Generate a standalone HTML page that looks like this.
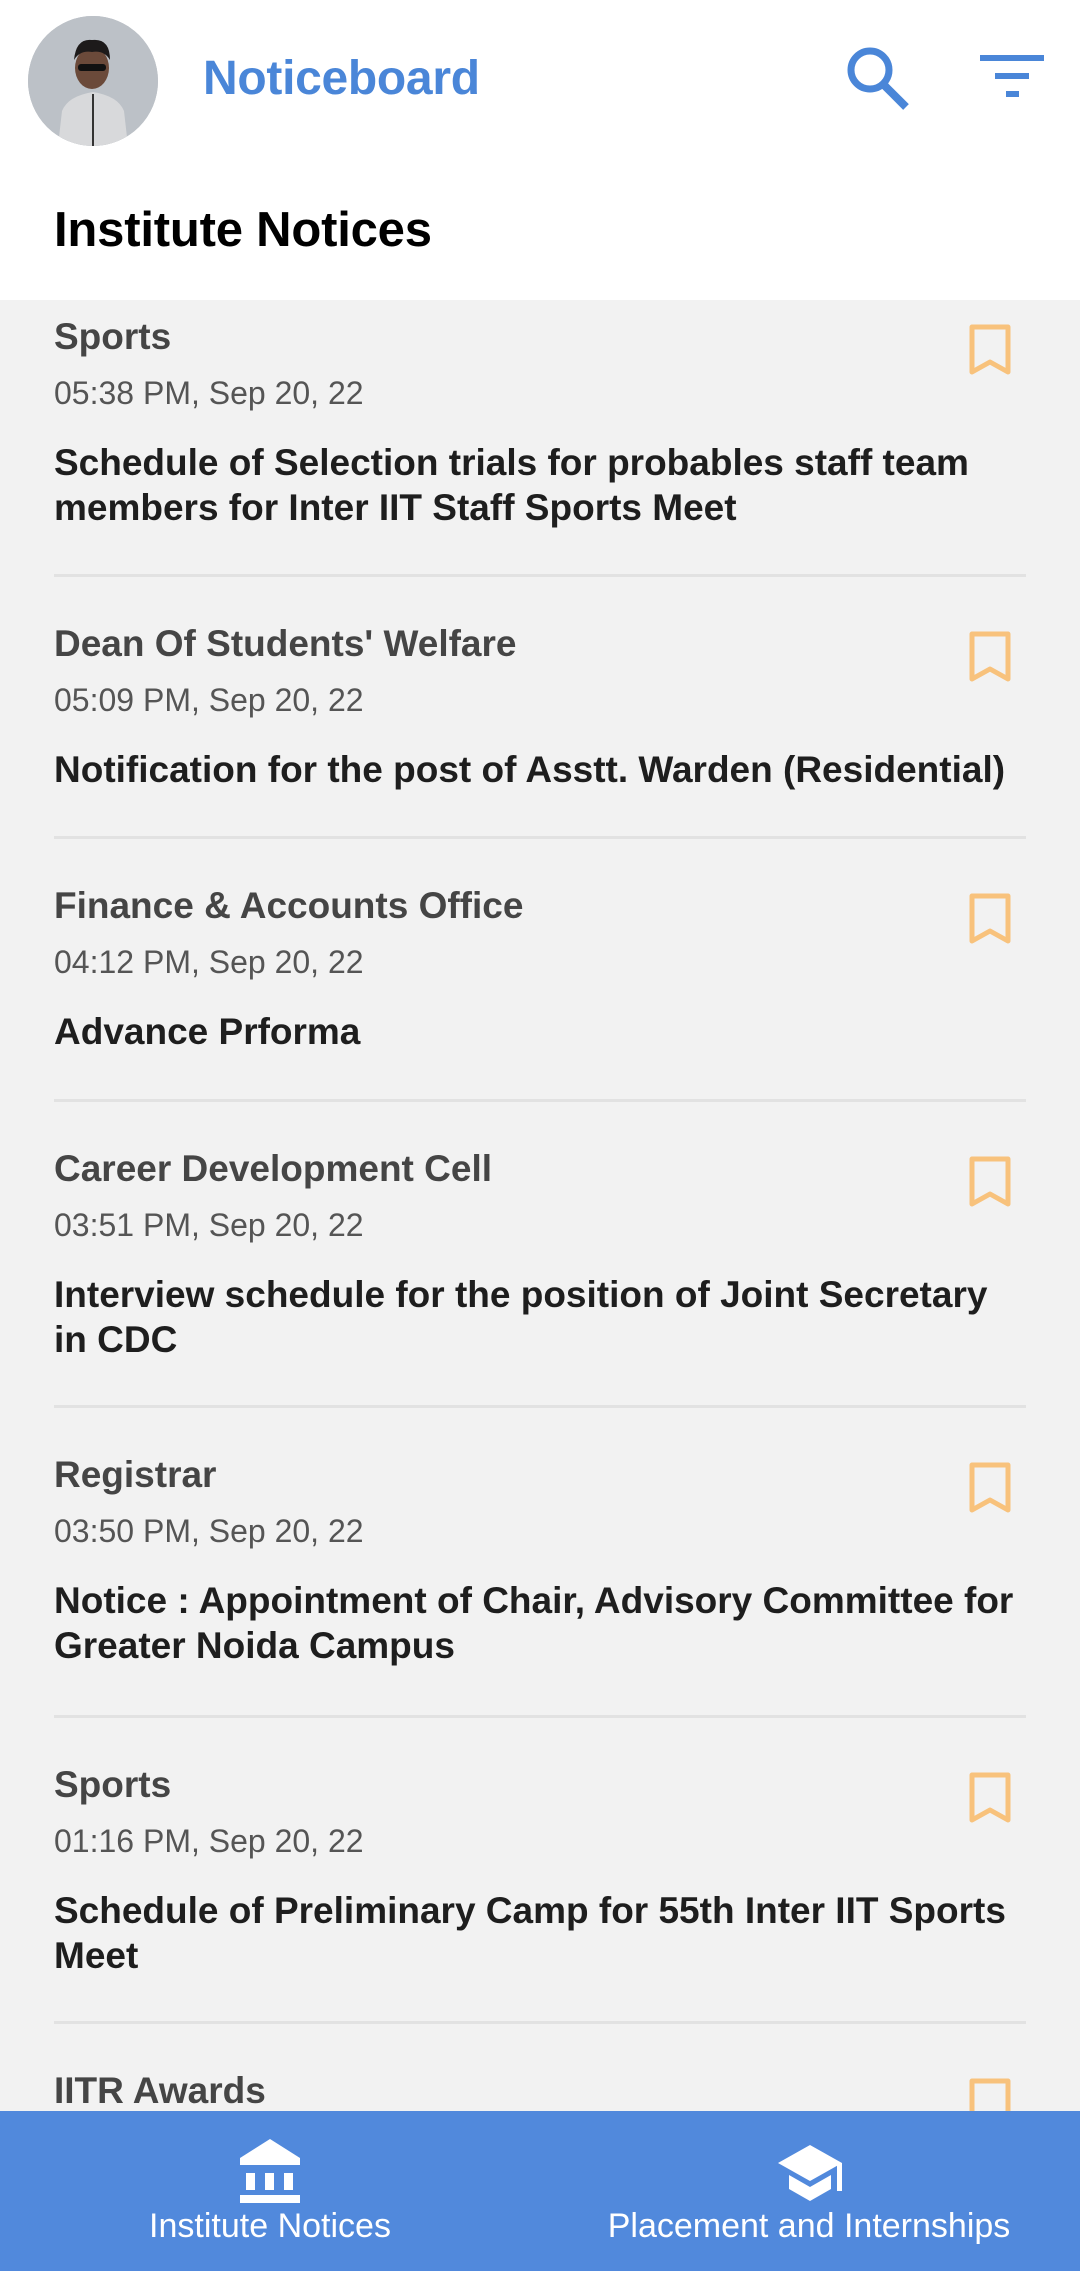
<!DOCTYPE html>
<html><head><meta charset="utf-8">
<style>
*{margin:0;padding:0;box-sizing:border-box}
body{width:1080px;height:2271px;overflow:hidden;background:#f2f2f2;font-family:"Liberation Sans",Arial,sans-serif;position:relative}
.top{position:absolute;left:0;top:0;width:1080px;height:300px;background:#fff;z-index:2}
.avatar{position:absolute;left:28px;top:16px;width:130px;height:130px;border-radius:50%;background:#b9bec4;overflow:hidden}
.brand{position:absolute;left:203px;top:51px;font-size:48px;font-weight:bold;color:#4a86d8;letter-spacing:-0.3px}
.h1{position:absolute;left:54px;top:202px;font-size:49px;font-weight:bold;color:#000;letter-spacing:-0.2px}
.item{position:absolute;left:0;width:1080px}
.cat{position:absolute;left:54px;font-size:37px;font-weight:bold;color:#454545;white-space:nowrap}
.date{position:absolute;left:54px;font-size:32px;color:#555;white-space:nowrap}
.title{position:absolute;left:54px;width:990px;font-size:37px;font-weight:bold;color:#1e1e1e;line-height:45px}
.sep{position:absolute;left:54px;width:972px;height:3px;background:#e2e2e2}
.bm{position:absolute;left:968px;width:44px;height:54px}
.nav{position:absolute;left:0;top:2111px;width:1080px;height:160px;background:#5189dc;z-index:3}
.nav .lbl{position:absolute;top:96px;font-size:34px;color:#fff;white-space:nowrap;transform:translateX(-50%)}
</style></head><body>
<div class="top">
  <div class="avatar">
    <svg width="130" height="130" viewBox="0 0 130 130">
      <rect width="130" height="130" fill="#bcc1c7"/>
      <path d="M30 130 L34 95 Q40 80 65 76 Q90 80 96 95 L100 130Z" fill="#d8d9db"/>
      <line x1="65" y1="78" x2="65" y2="130" stroke="#333" stroke-width="2"/>
      <ellipse cx="64" cy="52" rx="17" ry="21" fill="#6b4a3a"/>
      <path d="M46 44 Q48 22 64 24 Q82 22 82 44 Q76 34 64 36 Q52 34 46 44Z" fill="#1d1a1a"/>
      <rect x="50" y="48" width="28" height="7" rx="3" fill="#111"/>
    </svg>
  </div>
  <div class="brand">Noticeboard</div>
  <svg style="position:absolute;left:843px;top:43px" width="70" height="70" viewBox="0 0 70 70">
    <circle cx="27" cy="27" r="19" fill="none" stroke="#4a86d8" stroke-width="7"/>
    <line x1="40" y1="41" x2="63" y2="64" stroke="#4a86d8" stroke-width="8"/>
  </svg>
  <svg style="position:absolute;left:978px;top:55px" width="70" height="50" viewBox="0 0 70 50">
    <rect x="2" y="0" width="64" height="6" fill="#4a86d8"/>
    <rect x="17" y="18" width="34" height="6" fill="#4a86d8"/>
    <rect x="28" y="36" width="13" height="6" fill="#4a86d8"/>
  </svg>
  <div class="h1">Institute Notices</div>
</div>

<div class="item" style="top:268px">
  <div class="cat" style="top:48px">Sports</div>
  <div class="date" style="top:107px">05:38 PM, Sep 20, 22</div>
  <div class="title" style="top:172px">Schedule of Selection trials for probables staff team members for Inter IIT Staff Sports Meet</div>
</div>
<div class="sep" style="top:574px"></div>

<div class="item" style="top:575px">
  <div class="cat" style="top:48px">Dean Of Students' Welfare</div>
  <div class="date" style="top:107px">05:09 PM, Sep 20, 22</div>
  <div class="title" style="top:172px;white-space:nowrap">Notification for the post of Asstt. Warden (Residential)</div>
</div>
<div class="sep" style="top:836px"></div>

<div class="item" style="top:837px">
  <div class="cat" style="top:48px">Finance &amp; Accounts Office</div>
  <div class="date" style="top:107px">04:12 PM, Sep 20, 22</div>
  <div class="title" style="top:172px">Advance Prforma</div>
</div>
<div class="sep" style="top:1099px"></div>

<div class="item" style="top:1100px">
  <div class="cat" style="top:48px">Career Development Cell</div>
  <div class="date" style="top:107px">03:51 PM, Sep 20, 22</div>
  <div class="title" style="top:172px">Interview schedule for the position of Joint Secretary<br>in CDC</div>
</div>
<div class="sep" style="top:1405px"></div>

<div class="item" style="top:1406px">
  <div class="cat" style="top:48px">Registrar</div>
  <div class="date" style="top:107px">03:50 PM, Sep 20, 22</div>
  <div class="title" style="top:172px">Notice : Appointment of Chair, Advisory Committee for<br>Greater Noida Campus</div>
</div>
<div class="sep" style="top:1715px"></div>

<div class="item" style="top:1716px">
  <div class="cat" style="top:48px">Sports</div>
  <div class="date" style="top:107px">01:16 PM, Sep 20, 22</div>
  <div class="title" style="top:172px">Schedule of Preliminary Camp for 55th Inter IIT Sports<br>Meet</div>
</div>
<div class="sep" style="top:2021px"></div>

<div class="item" style="top:2022px">
  <div class="cat" style="top:48px">IITR Awards</div>
</div>

<svg class="bm" style="top:323px" viewBox="0 0 44 54"><path d="M4 4 H40 V49 L22 39 L4 49 Z" fill="none" stroke="#f8c27c" stroke-width="5" stroke-linejoin="round"/></svg>
<svg class="bm" style="top:630px" viewBox="0 0 44 54"><path d="M4 4 H40 V49 L22 39 L4 49 Z" fill="none" stroke="#f8c27c" stroke-width="5" stroke-linejoin="round"/></svg>
<svg class="bm" style="top:892px" viewBox="0 0 44 54"><path d="M4 4 H40 V49 L22 39 L4 49 Z" fill="none" stroke="#f8c27c" stroke-width="5" stroke-linejoin="round"/></svg>
<svg class="bm" style="top:1155px" viewBox="0 0 44 54"><path d="M4 4 H40 V49 L22 39 L4 49 Z" fill="none" stroke="#f8c27c" stroke-width="5" stroke-linejoin="round"/></svg>
<svg class="bm" style="top:1461px" viewBox="0 0 44 54"><path d="M4 4 H40 V49 L22 39 L4 49 Z" fill="none" stroke="#f8c27c" stroke-width="5" stroke-linejoin="round"/></svg>
<svg class="bm" style="top:1771px" viewBox="0 0 44 54"><path d="M4 4 H40 V49 L22 39 L4 49 Z" fill="none" stroke="#f8c27c" stroke-width="5" stroke-linejoin="round"/></svg>
<svg class="bm" style="top:2077px" viewBox="0 0 44 54"><path d="M4 4 H40 V49 L22 39 L4 49 Z" fill="none" stroke="#f8c27c" stroke-width="5" stroke-linejoin="round"/></svg>

<div class="nav">
  <svg style="position:absolute;left:239px;top:28px" width="62" height="64" viewBox="0 0 62 64">
    <path d="M31 0 L61 19 V26 H1 V19 Z" fill="#fff"/>
    <rect x="7" y="34" width="9" height="17" fill="#fff"/>
    <rect x="26" y="34" width="9" height="17" fill="#fff"/>
    <rect x="45" y="34" width="9" height="17" fill="#fff"/>
    <rect x="1" y="56" width="60" height="9" fill="#fff"/>
  </svg>
  <div class="lbl" style="left:270px">Institute Notices</div>
  <svg style="position:absolute;left:776px;top:34px" width="68" height="60" viewBox="0 0 68 60">
    <path d="M34 0 L66 18 L34 36 L2 18 Z" fill="#fff"/>
    <path d="M13 30 V44 L34 56 L55 44 V30 L34 42 Z" fill="#fff"/>
    <rect x="61" y="18" width="5" height="28" fill="#fff"/>
  </svg>
  <div class="lbl" style="left:809px">Placement and Internships</div>
</div>
</body></html>
